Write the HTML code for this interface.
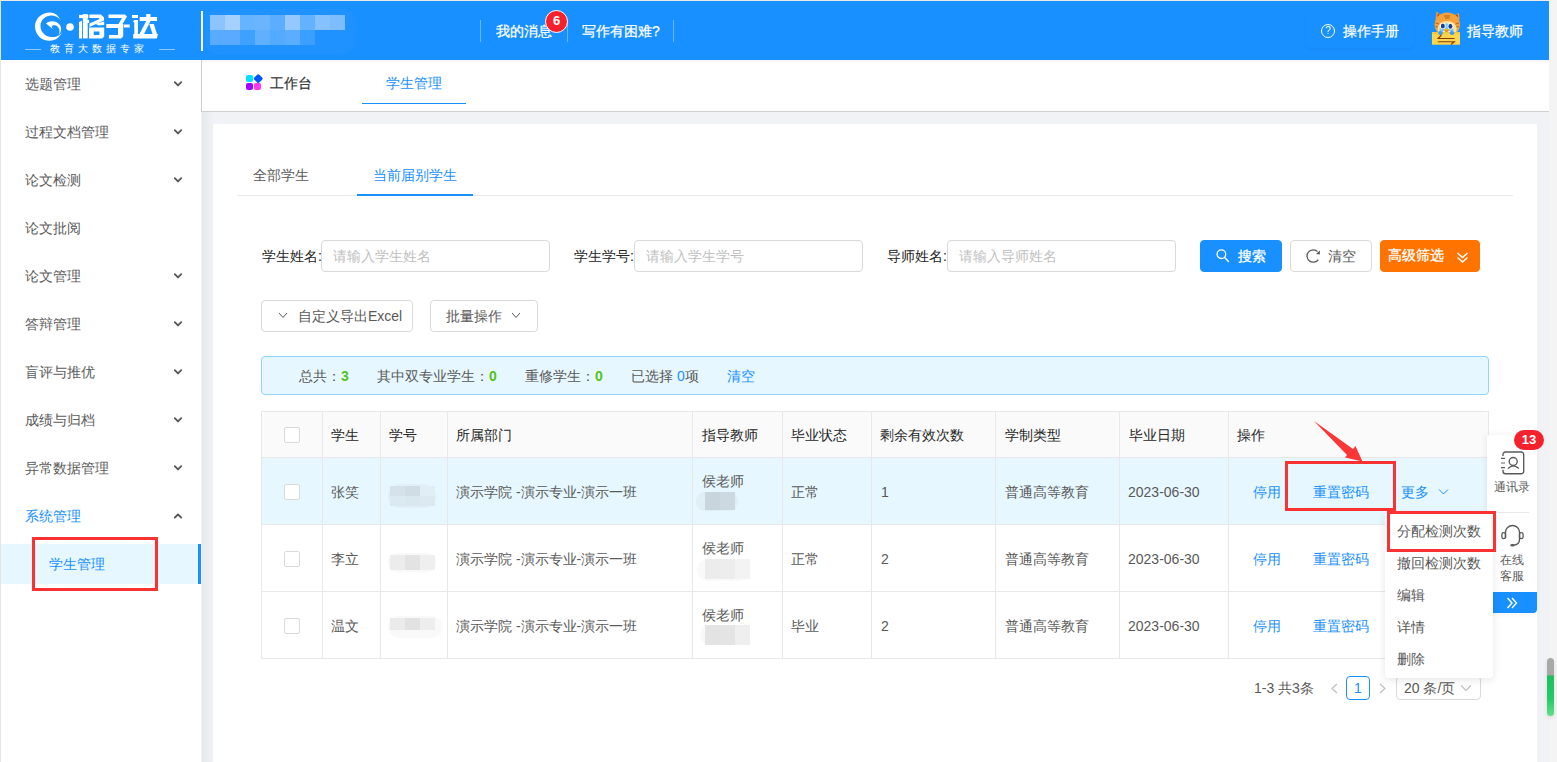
<!DOCTYPE html>
<html><head><meta charset="utf-8">
<style>
*{box-sizing:border-box;margin:0;padding:0}
html,body{width:1557px;height:762px;overflow:hidden}
body{position:relative;background:#f0f2f5;font-family:"Liberation Sans",sans-serif;font-size:14px;color:#595959}
.a{position:absolute}
.t{position:absolute;line-height:20px;white-space:nowrap}
#topline{left:0;top:0;width:1557px;height:1px;background:#ece9e6}
#leftline{left:0;top:0;width:1px;height:762px;background:#e4e4e4}
#header{left:1px;top:1px;width:1548px;height:59px;background:#1890ff}
#track{left:1549px;top:0;width:8px;height:762px;background:#f4f4f4}
#sidebar{left:1px;top:60px;width:200px;height:702px;background:#fff}
#tabbar{left:201px;top:60px;width:1348px;height:52px;background:#fff;border-left:1px solid #cfcfcf;border-bottom:1px solid #cfcfcf}
#card{left:213px;top:124px;width:1324px;height:700px;background:#fff;border-radius:2px}
.chev{position:absolute;width:6px;height:6px;border-right:1.9px solid #5a5a5a;border-bottom:1.9px solid #5a5a5a;transform:rotate(45deg)}
.side{color:#5c5c5c}
.blue{color:#1890ff}
.dark{color:#262626}
.wt{-webkit-text-stroke:0.3px #fff}
.inp{border:1px solid #d9d9d9;border-radius:4px;background:#fff}
.inp span{position:absolute;left:11px;top:5px;line-height:20px;color:#bfbfbf;white-space:nowrap}
.ln{background:#e8e8e8}
.cb{width:16px;height:16px;border:1px solid #d9d9d9;border-radius:2px;background:#fff}
.btn{border:1px solid #d9d9d9;border-radius:4px;background:#fff}

</style></head><body>
<div class="a" id="topline"></div>
<div class="a" id="leftline"></div>
<div class="a" id="track"></div>
<div class="a" id="header"></div>
<div class="a" id="sidebar"></div>
<div class="a" id="tabbar"></div>
<div class="a" style="left:201px;top:60px;width:1348px;height:3px;background:linear-gradient(180deg,rgba(0,0,0,.05),rgba(0,0,0,0))"></div>
<div class="a" id="card"></div>


<!-- header -->
<svg class="a" style="left:34px;top:11px" width="42" height="32" viewBox="0 0 42 32">
  <path d="M16 1.5 C7 1.5 1 8 1 15.5 C1 23.5 7.5 29.8 15.5 29.8 C22 29.8 26.5 25.5 28.5 20 C27 24 22.5 26.5 17.5 26 C11 25.5 6.5 21 6.5 15 C6.5 9 11.5 4.5 17.5 4.5 C21 4.5 24.5 6 26.5 9 C24.5 4.5 20.5 1.5 16 1.5 Z" fill="#fff"/>
  <path d="M12 12.5 C15.5 9.5 21 9.5 24.5 12.5 C28 15.5 28 21 24.5 24 C26.5 20.5 25.5 16 22 14.5 C20 13.8 18.5 14.2 17.5 15.5 L18.8 18 Z" fill="#fff"/>
  <circle cx="36" cy="16" r="3.8" fill="#fff"/>
</svg>
<svg class="a" style="left:70px;top:10px" width="95" height="32" viewBox="70 10 95 32">
<g fill="#fff">
 <!-- 格: 木 -->
 <rect x="79" y="14.9" width="9.3" height="3.2"/>
 <rect x="82.9" y="14" width="4.8" height="24.4"/>
 <path d="M79 22 L82 20.8 V38.4 H79 Z"/>
 <rect x="87.2" y="20" width="1.9" height="3"/>
 <!-- 格: 各 -->
 <path d="M89.4 14.5 H101 L104 17.5 V20.5 L89.4 27 V23.5 L98.5 19.5 L99.5 18 H89.4 Z"/>
 <path d="M95.5 23.8 L104.2 21.5 V25 L98.6 25.6 Z"/>
 <path d="M89 27.5 H104.2 V36.4 L102.2 38.4 H89 Z M93.7 31.4 V34.9 H99.4 V31.4 Z" fill-rule="evenodd"/>
 <!-- 子 -->
 <path d="M108.5 14.5 H125 L127 16.5 L122.5 24 H118.5 L122 18 H108.5 Z"/>
 <rect x="106.3" y="24" width="16.9" height="4"/>
 <rect x="124" y="24.5" width="5.7" height="3"/>
 <path d="M118 24 H123.2 V36.4 L121 38.4 H108.9 V34.9 H118 Z"/>
 <!-- 达 -->
 <rect x="132" y="15" width="6" height="3"/>
 <path d="M132.8 21.5 L134.3 20 H138 V34 H158 L156.8 38.4 H133.2 V34 L134.3 34 V22.5 Z"/>
 <rect x="139.7" y="17" width="17.3" height="4"/>
 <rect x="146.2" y="14" width="4.3" height="7"/>
 <path d="M146.2 21 H150.5 L144 34 H139.5 Z"/>
 <path d="M149.2 24 H153.8 L157 34 H152.6 Z"/>
</g>
</svg>
<div class="a" style="left:25px;top:49px;width:16px;height:1px;background:rgba(255,255,255,.5)"></div>
<div class="a" style="left:159px;top:49px;width:16px;height:1px;background:rgba(255,255,255,.5)"></div>
<div class="t" style="left:50px;top:43px;font-size:10px;line-height:12px;color:#fff;letter-spacing:4px">教育大数据专家</div>
<div class="a" style="left:201px;top:11px;width:2px;height:40px;background:#fff"></div>
<div class="a" style="left:205px;top:9px;width:150px;height:45px;border-radius:12px 12px 14px 12px;background:#2894ff;opacity:.5"></div>
<div class="a" style="left:210px;top:15px;width:15px;height:15px;background:#8cc4ff"></div>
<div class="a" style="left:225px;top:15px;width:15px;height:15px;background:#a6d0ff"></div>
<div class="a" style="left:240px;top:15px;width:15px;height:15px;background:#66b3ff"></div>
<div class="a" style="left:255px;top:15px;width:15px;height:15px;background:#6bb5ff"></div>
<div class="a" style="left:270px;top:15px;width:15px;height:15px;background:#5cadff"></div>
<div class="a" style="left:285px;top:15px;width:15px;height:15px;background:#94c8ff"></div>
<div class="a" style="left:300px;top:15px;width:15px;height:15px;background:#63b1ff"></div>
<div class="a" style="left:315px;top:15px;width:15px;height:15px;background:#85c1ff"></div>
<div class="a" style="left:330px;top:15px;width:15px;height:15px;background:#7dbdff"></div>
<div class="a" style="left:210px;top:30px;width:15px;height:15px;background:#59abff"></div>
<div class="a" style="left:225px;top:30px;width:15px;height:15px;background:#5aabff"></div>
<div class="a" style="left:240px;top:30px;width:15px;height:15px;background:#3ea0ff"></div>
<div class="a" style="left:255px;top:30px;width:15px;height:15px;background:#61afff"></div>
<div class="a" style="left:270px;top:30px;width:15px;height:15px;background:#54aaff"></div>
<div class="a" style="left:285px;top:30px;width:15px;height:15px;background:#5aadff"></div>
<div class="a" style="left:300px;top:30px;width:15px;height:15px;background:#3b9fff"></div>
<div class="a" style="left:480px;top:20px;width:1px;height:22px;background:rgba(255,255,255,.35)"></div>
<div class="a" style="left:567px;top:20px;width:1px;height:22px;background:rgba(255,255,255,.35)"></div>
<div class="a" style="left:673px;top:20px;width:1px;height:22px;background:rgba(255,255,255,.35)"></div>
<div class="t" style="left:496px;top:21px;color:#fff;-webkit-text-stroke:0.25px #fff">我的消息</div>
<div class="t" style="left:582px;top:21px;color:#fff;-webkit-text-stroke:0.25px #fff">写作有困难?</div>
<div class="a" style="left:545px;top:10px;width:23px;height:23px;border-radius:50%;background:#f5222d;border:1.5px solid #fff;color:#fff;font-size:13px;font-weight:bold;line-height:20px;text-align:center">6</div>
<div class="a" style="left:1305px;top:13px;width:109px;height:35px;border-radius:6px;box-shadow:0 2px 3px rgba(0,0,0,.04)"></div>
<div class="a" style="left:1321px;top:24px;width:14px;height:14px;border-radius:50%;border:1.3px solid #fff;color:#fff;font-size:10px;line-height:11px;text-align:center">?</div>
<div class="t" style="left:1343px;top:21px;color:#fff;-webkit-text-stroke:0.25px #fff">操作手册</div>
<div class="t" style="left:1467px;top:21px;color:#fff;-webkit-text-stroke:0.25px #fff">指导教师</div>
<svg class="a" style="left:1425px;top:5px" width="45" height="45" viewBox="0 0 45 45">
 <path d="M10.5 14 L11.5 6.5 L16 10 Z" fill="#f59a2e"/>
 <path d="M34.5 15 L34 8 L29 10.5 Z" fill="#f59a2e"/>
 <path d="M12.3 12 L12.8 8 L14.8 10 Z" fill="#a5561b"/>
 <path d="M33 12.5 L32.8 9 L30.5 10.5 Z" fill="#a5561b"/>
 <ellipse cx="22.3" cy="19.5" rx="12.7" ry="12" fill="#f7a238"/>
 <path d="M19 11 H25 M20 13 H24.5" stroke="#b35c1a" stroke-width="1"/>
 <path d="M10.5 18 L14 19 M10.5 21.5 L13.5 22 M34 18 L30.5 19 M34 21.5 L31 22" stroke="#b35c1a" stroke-width="0.9"/>
 <ellipse cx="22.2" cy="24" rx="9.5" ry="8" fill="#fde3a0"/>
 <ellipse cx="21.5" cy="25" rx="7" ry="6.5" fill="#6ec7ff"/>
 <ellipse cx="17.8" cy="21" rx="2.8" ry="3.2" fill="#fff"/><ellipse cx="25.4" cy="21.3" rx="2.8" ry="3.2" fill="#fff"/><ellipse cx="17.8" cy="21" rx="2" ry="2.5" fill="#1b3f8f"/>
 <ellipse cx="25.4" cy="21.3" rx="2" ry="2.5" fill="#1b3f8f"/>
 <ellipse cx="21.5" cy="28.5" rx="5.5" ry="2.8" fill="#fff"/>
 <path d="M18.5 24.5 Q21.5 23 24.8 24.5 Q23.5 27.5 21.5 27.5 Q19.5 27.5 18.5 24.5 Z" fill="#f7b21d"/>
 <path d="M20 25.8 Q21.5 27 23.3 25.8" fill="#e23b2b"/>
 <rect x="7" y="27" width="28" height="12.7" fill="#ffd54a"/>
 <rect x="7" y="27" width="28" height="2" fill="#f6c83a"/>
 <ellipse cx="15.5" cy="28" rx="2.4" ry="2" fill="#3a9df0"/>
 <ellipse cx="27" cy="28" rx="2.4" ry="2" fill="#3a9df0"/>
 <path d="M16.5 30 L13 33.5 H29.5 M12.8 36.7 H29.3 L26 39.5" fill="none" stroke="#8a3b12" stroke-width="1.1"/>
</svg>


<!-- tabbar -->
<div class="a" style="left:246px;top:75px;width:7px;height:7px;border-radius:2px;background:#00e1ff"></div>
<div class="a" style="left:255px;top:75px;width:6.5px;height:6.5px;border-radius:1.5px;background:#0055ff;transform:rotate(45deg)"></div>
<div class="a" style="left:246px;top:83px;width:7px;height:7px;border-radius:2px;background:#a400ff"></div>
<div class="a" style="left:254px;top:83px;width:7px;height:7px;border-radius:2px;background:#ff36f0"></div>
<div class="t" style="left:270px;top:73px;color:#333;font-size:14px;-webkit-text-stroke:0.2px #333">工作台</div>
<div class="t blue" style="left:386px;top:73px">学生管理</div>
<div class="a" style="left:362px;top:103px;width:104px;height:1px;background:#1890ff"></div>
<div class="a" style="left:202px;top:112px;width:12px;height:650px;background:linear-gradient(90deg,rgba(0,0,0,.04),rgba(0,0,0,0))"></div>

<!-- tabs -->
<div class="a" style="left:237px;top:195px;width:1276px;height:1px;background:#e8e8e8"></div>
<div class="t" style="left:253px;top:165px;color:#595959">全部学生</div>
<div class="t blue" style="left:373px;top:165px">当前届别学生</div>
<div class="a" style="left:357px;top:194px;width:116px;height:2px;background:#1890ff"></div>

<!-- search -->
<div class="t dark" style="left:262px;top:246px">学生姓名:</div>
<div class="a inp" style="left:321px;top:240px;width:229px;height:32px"><span>请输入学生姓名</span></div>
<div class="t dark" style="left:574px;top:246px">学生学号:</div>
<div class="a inp" style="left:634px;top:240px;width:229px;height:32px"><span>请输入学生学号</span></div>
<div class="t dark" style="left:887px;top:246px">导师姓名:</div>
<div class="a inp" style="left:947px;top:240px;width:229px;height:32px"><span>请输入导师姓名</span></div>
<div class="a btn" style="left:1200px;top:240px;width:82px;height:32px;background:#1890ff;border-color:#1890ff;color:#fff"></div>
<div class="t wt" style="left:1238px;top:246px;color:#fff">搜索</div>
<svg class="a" style="left:1216px;top:248px" width="15" height="15" viewBox="0 0 15 15"><circle cx="5.4" cy="6.2" r="4.3" fill="none" stroke="#fff" stroke-width="1.3"/><path d="M8.6 9.5 L12.5 13.5" stroke="#fff" stroke-width="1.4" stroke-linecap="round"/></svg>
<div class="a btn" style="left:1290px;top:240px;width:82px;height:32px"></div>
<svg class="a" style="left:1305px;top:248px" width="16" height="16" viewBox="0 0 16 16"><path d="M12.6 3.6 A6.2 6.2 0 1 0 13.3 11.6" fill="none" stroke="#595959" stroke-width="1.3"/><path d="M15 2.4 L14.8 6.4 L11 6 Z" fill="#595959"/></svg>
<div class="t" style="left:1328px;top:246px;color:#595959">清空</div>
<div class="a btn" style="left:1380px;top:240px;width:100px;height:32px;background:#ff7300;border-color:#ff7300"></div>
<div class="t wt" style="left:1388px;top:245px;color:#fff">高级筛选</div>
<svg class="a" style="left:1456px;top:251px" width="13" height="13" viewBox="0 0 13 13"><path d="M1.5 2 L6.5 6.5 L11.5 2 M1.5 6.5 L6.5 11 L11.5 6.5" fill="none" stroke="#fff" stroke-width="1.5"/></svg>

<div class="a btn" style="left:261px;top:300px;width:152px;height:32px"></div>
<svg class="a" style="left:278px;top:312px" width="10" height="7" viewBox="0 0 10 7"><path d="M1 1 L5 5.5 L9 1" fill="none" stroke="#595959" stroke-width="1"/></svg>
<div class="t" style="left:298px;top:306px;color:#595959">自定义导出Excel</div>
<div class="a btn" style="left:430px;top:300px;width:108px;height:32px"></div>
<div class="t" style="left:446px;top:306px;color:#595959">批量操作</div>
<svg class="a" style="left:511px;top:312px" width="10" height="7" viewBox="0 0 10 7"><path d="M1 1 L5 5.5 L9 1" fill="none" stroke="#595959" stroke-width="1"/></svg>

<!-- alert -->
<div class="a" style="left:261px;top:356px;width:1228px;height:39px;background:#e6f7ff;border:1px solid #91d5ff;border-radius:4px"></div>
<div class="t" style="left:299px;top:366px">总共：<span style="color:#52c41a;font-weight:bold;margin-left:0px">3</span></div>
<div class="t" style="left:377px;top:366px">其中双专业学生：<span style="color:#52c41a;font-weight:bold">0</span></div>
<div class="t" style="left:525px;top:366px">重修学生：<span style="color:#52c41a;font-weight:bold">0</span></div>
<div class="t" style="left:631px;top:366px">已选择 <span style="color:#1890ff">0</span>项</div>
<div class="t blue" style="left:727px;top:366px">清空</div>

<!-- table -->
<div class="a" style="left:262px;top:412px;width:1226px;height:45px;background:#fafafa;border-radius:4px 4px 0 0"></div>
<div class="a" style="left:262px;top:458px;width:1226px;height:66px;background:#e6f7ff"></div>
<div class="a ln" style="left:261px;top:411px;width:1228px;height:1px"></div>
<div class="a ln" style="left:261px;top:457px;width:1228px;height:1px"></div>
<div class="a ln" style="left:261px;top:524px;width:1228px;height:1px"></div>
<div class="a ln" style="left:261px;top:591px;width:1228px;height:1px"></div>
<div class="a ln" style="left:261px;top:658px;width:1228px;height:1px"></div>
<div class="a ln" style="left:261px;top:412px;width:1px;height:246px"></div>
<div class="a ln" style="left:322px;top:412px;width:1px;height:246px"></div>
<div class="a ln" style="left:380px;top:412px;width:1px;height:246px"></div>
<div class="a ln" style="left:447px;top:412px;width:1px;height:246px"></div>
<div class="a ln" style="left:692px;top:412px;width:1px;height:246px"></div>
<div class="a ln" style="left:782px;top:412px;width:1px;height:246px"></div>
<div class="a ln" style="left:871px;top:412px;width:1px;height:246px"></div>
<div class="a ln" style="left:995px;top:412px;width:1px;height:246px"></div>
<div class="a ln" style="left:1119px;top:412px;width:1px;height:246px"></div>
<div class="a ln" style="left:1228px;top:412px;width:1px;height:246px"></div>
<div class="a ln" style="left:1488px;top:412px;width:1px;height:246px"></div>
<div class="t dark" style="left:331px;top:425px">学生</div>
<div class="t dark" style="left:389px;top:425px">学号</div>
<div class="t dark" style="left:456px;top:425px">所属部门</div>
<div class="t dark" style="left:702px;top:425px">指导教师</div>
<div class="t dark" style="left:791px;top:425px">毕业状态</div>
<div class="t dark" style="left:880px;top:425px">剩余有效次数</div>
<div class="t dark" style="left:1005px;top:425px">学制类型</div>
<div class="t dark" style="left:1129px;top:425px">毕业日期</div>
<div class="t dark" style="left:1237px;top:425px">操作</div>
<div class="a cb" style="left:284px;top:427px"></div>
<div class="a cb" style="left:284px;top:484px"></div>
<div class="t" style="left:331px;top:482px">张笑</div>
<div class="t" style="left:456px;top:482px">演示学院 -演示专业-演示一班</div>
<div class="t" style="left:702px;top:471px">侯老师</div>
<div class="t" style="left:791px;top:482px">正常</div>
<div class="t" style="left:881px;top:482px">1</div>
<div class="t" style="left:1005px;top:482px">普通高等教育</div>
<div class="t" style="left:1128px;top:482px">2023-06-30</div>
<div class="t blue" style="left:1253px;top:482px">停用</div>
<div class="t blue" style="left:1313px;top:482px">重置密码</div>
<div class="a cb" style="left:284px;top:551px"></div>
<div class="t" style="left:331px;top:549px">李立</div>
<div class="t" style="left:456px;top:549px">演示学院 -演示专业-演示一班</div>
<div class="t" style="left:702px;top:538px">侯老师</div>
<div class="t" style="left:791px;top:549px">正常</div>
<div class="t" style="left:881px;top:549px">2</div>
<div class="t" style="left:1005px;top:549px">普通高等教育</div>
<div class="t" style="left:1128px;top:549px">2023-06-30</div>
<div class="t blue" style="left:1253px;top:549px">停用</div>
<div class="t blue" style="left:1313px;top:549px">重置密码</div>
<div class="a cb" style="left:284px;top:618px"></div>
<div class="t" style="left:331px;top:616px">温文</div>
<div class="t" style="left:456px;top:616px">演示学院 -演示专业-演示一班</div>
<div class="t" style="left:702px;top:605px">侯老师</div>
<div class="t" style="left:791px;top:616px">毕业</div>
<div class="t" style="left:881px;top:616px">2</div>
<div class="t" style="left:1005px;top:616px">普通高等教育</div>
<div class="t" style="left:1128px;top:616px">2023-06-30</div>
<div class="t blue" style="left:1253px;top:616px">停用</div>
<div class="t blue" style="left:1313px;top:616px">重置密码</div>
<div class="a" style="left:388px;top:484px;width:48px;height:24px;border-radius:12px;background:#e1f0f8"></div>
<div class="a" style="left:390px;top:486px;width:15px;height:10px;background:#d5e2ea"></div>
<div class="a" style="left:405px;top:486px;width:15px;height:10px;background:#d0dde5"></div>
<div class="a" style="left:420px;top:486px;width:15px;height:10px;background:#e0eef6"></div>
<div class="a" style="left:390px;top:496px;width:15px;height:10px;background:#dbe9f1"></div>
<div class="a" style="left:405px;top:496px;width:15px;height:10px;background:#d9e7ef"></div>
<div class="a" style="left:420px;top:496px;width:15px;height:10px;background:#dde9f1"></div>
<div class="a" style="left:696px;top:492px;width:42px;height:19px;border-radius:9px;background:#e0eef6"></div>
<div class="a" style="left:705px;top:492px;width:15px;height:18px;background:#c8d5dd"></div>
<div class="a" style="left:720px;top:492px;width:15px;height:18px;background:#ccd9e1"></div>
<div class="a" style="left:388px;top:553px;width:48px;height:19px;border-radius:9px;background:#f9f9f9"></div>
<div class="a" style="left:390px;top:555px;width:15px;height:15px;background:#ececec"></div>
<div class="a" style="left:405px;top:555px;width:15px;height:15px;background:#e3e3e3"></div>
<div class="a" style="left:420px;top:555px;width:15px;height:15px;background:#efefef"></div>
<div class="a" style="left:697px;top:559px;width:52px;height:22px;border-radius:11px;background:#f9f9f9"></div>
<div class="a" style="left:705px;top:559px;width:15px;height:20px;background:#ececec"></div>
<div class="a" style="left:720px;top:559px;width:15px;height:20px;background:#ededed"></div>
<div class="a" style="left:735px;top:559px;width:15px;height:20px;background:#f3f3f3"></div>
<div class="a" style="left:388px;top:616px;width:54px;height:22px;border-radius:11px;background:#f9f9f9"></div>
<div class="a" style="left:390px;top:618px;width:15px;height:12px;background:#ebebeb"></div>
<div class="a" style="left:405px;top:618px;width:15px;height:12px;background:#e2e2e2"></div>
<div class="a" style="left:420px;top:618px;width:15px;height:12px;background:#eeeeee"></div>
<div class="a" style="left:700px;top:625px;width:50px;height:20px;border-radius:10px;background:#f8f8f8"></div>
<div class="a" style="left:705px;top:625px;width:15px;height:20px;background:#e3e3e3"></div>
<div class="a" style="left:720px;top:625px;width:15px;height:20px;background:#e4e4e4"></div>
<div class="a" style="left:735px;top:625px;width:15px;height:20px;background:#efefef"></div>
<div class="t blue" style="left:1401px;top:482px">更多</div>
<svg class="a" style="left:1438px;top:488px" width="11" height="8" viewBox="0 0 11 8"><path d="M1 1.5 L5.5 6 L10 1.5" fill="none" stroke="#1890ff" stroke-width="1"/></svg>
<div class="t" style="left:1254px;top:678px">1-3 共3条</div>
<svg class="a" style="left:1330px;top:683px" width="9" height="11" viewBox="0 0 9 11"><path d="M7 1 L2 5.5 L7 10" fill="none" stroke="#bfbfbf" stroke-width="1.2"/></svg>
<div class="a" style="left:1346px;top:676px;width:24px;height:24px;border:1px solid #1890ff;border-radius:4px;color:#1890ff;text-align:center;line-height:22px">1</div>
<svg class="a" style="left:1378px;top:683px" width="9" height="11" viewBox="0 0 9 11"><path d="M2 1 L7 5.5 L2 10" fill="none" stroke="#bfbfbf" stroke-width="1.2"/></svg>
<div class="a" style="left:1396px;top:676px;width:85px;height:24px;border:1px solid #d9d9d9;border-radius:4px"></div>
<div class="t" style="left:1404px;top:678px">20 条/页</div>
<svg class="a" style="left:1460px;top:684px" width="12" height="8" viewBox="0 0 12 8"><path d="M1 1.5 L6 6.5 L11 1.5" fill="none" stroke="#bfbfbf" stroke-width="1.1"/></svg>

<!-- overlays -->
<div class="a" style="left:1487px;top:435px;width:50px;height:178px;background:#fff;box-shadow:-1px 0 6px rgba(0,0,0,.07);border-radius:2px 0 0 2px"></div>
<svg class="a" style="left:1496px;top:447px" width="34" height="32" viewBox="0 0 34 32">
 <path d="M7 9 V7.5 A2.5 2.5 0 0 1 9.5 5 H25.2 A2.5 2.5 0 0 1 27.7 7.5 V24.2 A2.5 2.5 0 0 1 25.2 26.7 H9.5 A2.5 2.5 0 0 1 7 24.2 V22.7" fill="none" stroke="#595959" stroke-width="1.35"/>
 <path d="M5 11.3 H9 M5 20.6 H9" stroke="#595959" stroke-width="1.35"/>
 <path d="M5 16 H9" stroke="#8c8c8c" stroke-width="1.35"/>
 <circle cx="17.2" cy="14.5" r="4" fill="none" stroke="#595959" stroke-width="1.35"/>
 <path d="M12 21.6 Q17.2 16 22.9 21.6" fill="none" stroke="#595959" stroke-width="1.35"/>
</svg>
<div class="t" style="left:1494px;top:478px;font-size:12px;line-height:18px;color:#595959">通讯录</div>
<div class="a" style="left:1497px;top:512px;width:32px;height:1px;background:#e8e8e8"></div>
<svg class="a" style="left:1496px;top:520px" width="34" height="32" viewBox="0 0 34 32">
 <path d="M9.5 18 V12 A7 6.5 0 0 1 23.5 12 V19.5 C23.5 23 21 25 17.5 25.2" fill="none" stroke="#595959" stroke-width="1.4"/>
 <rect x="5.9" y="12.6" width="3.6" height="6.1" rx="1.8" fill="none" stroke="#595959" stroke-width="1.3"/>
 <rect x="23.5" y="12.6" width="3.6" height="6.1" rx="1.8" fill="none" stroke="#595959" stroke-width="1.3"/>
 <ellipse cx="16.4" cy="25.3" rx="2.2" ry="1.3" fill="#595959"/>
</svg>
<div class="t" style="left:1500px;top:552px;font-size:12px;line-height:16px;color:#595959">在线<br>客服</div>
<div class="a" style="left:1487px;top:592px;width:50px;height:21px;background:#1890ff;border-radius:0 0 4px 0"></div>
<svg class="a" style="left:1506px;top:597px" width="12" height="12" viewBox="0 0 12 12"><path d="M1.5 1 L6 6 L1.5 11 M6 1 L10.5 6 L6 11" fill="none" stroke="#fff" stroke-width="1.4"/></svg>
<div class="a" style="left:1514px;top:430px;width:30px;height:20px;border-radius:10px;background:#f5222d;color:#fff;font-size:13px;font-weight:bold;line-height:20px;text-align:center">13</div>

<div class="a" style="left:1385px;top:513px;width:108px;height:165px;background:#fff;border-radius:4px;box-shadow:0 2px 8px rgba(0,0,0,.1)"></div>
<div class="t" style="left:1397px;top:521px">分配检测次数</div>
<div class="t" style="left:1397px;top:553px">撤回检测次数</div>
<div class="t" style="left:1397px;top:585px">编辑</div>
<div class="t" style="left:1397px;top:617px">详情</div>
<div class="t" style="left:1397px;top:649px">删除</div>

<div class="a" style="left:1285px;top:461px;width:111px;height:50px;border:3px solid #fb3232"></div>
<div class="a" style="left:1387px;top:511px;width:109px;height:41px;border:3px solid #fb3232"></div>
<svg class="a" style="left:1300px;top:410px" width="70" height="55" viewBox="0 0 70 55">
 <path d="M14 11 L53 39 L55.5 36 L62.5 51.5 L45 47.5 L47 45 Z" fill="#fb3636"/>
</svg>
<div class="a" style="left:1547px;top:658px;width:7px;height:58px;border-radius:3.5px;background:linear-gradient(180deg,#a8a8a8 0,#a8a8a8 29%,#1fbf5f 31%,#25c966 70%,#5fe08a 100%);box-shadow:0 2px 4px rgba(0,0,0,.1)"></div>

<!-- sidebar -->
<div class="t side" style="left:25px;top:74px">选题管理</div>
<div class="t side" style="left:25px;top:122px">过程文档管理</div>
<div class="t side" style="left:25px;top:170px">论文检测</div>
<div class="t side" style="left:25px;top:218px">论文批阅</div>
<div class="t side" style="left:25px;top:266px">论文管理</div>
<div class="t side" style="left:25px;top:314px">答辩管理</div>
<div class="t side" style="left:25px;top:362px">盲评与推优</div>
<div class="t side" style="left:25px;top:410px">成绩与归档</div>
<div class="t side" style="left:25px;top:458px">异常数据管理</div>
<div class="t blue" style="left:25px;top:506px">系统管理</div>
<div class="a" style="left:1px;top:544px;width:200px;height:40px;background:#e6f7ff"></div>
<div class="a" style="left:198px;top:544px;width:3px;height:40px;background:#1890ff"></div>
<div class="t blue" style="left:49px;top:554px">学生管理</div>
<svg class="a" style="left:172px;top:76px" width="12" height="12" viewBox="0 0 12 12"><path d="M2.8 6.2 L6 9.4 L9.2 6.2" fill="none" stroke="#555" stroke-width="1.9" stroke-linecap="round" stroke-linejoin="round"/></svg>
<svg class="a" style="left:172px;top:124px" width="12" height="12" viewBox="0 0 12 12"><path d="M2.8 6.2 L6 9.4 L9.2 6.2" fill="none" stroke="#555" stroke-width="1.9" stroke-linecap="round" stroke-linejoin="round"/></svg>
<svg class="a" style="left:172px;top:172px" width="12" height="12" viewBox="0 0 12 12"><path d="M2.8 6.2 L6 9.4 L9.2 6.2" fill="none" stroke="#555" stroke-width="1.9" stroke-linecap="round" stroke-linejoin="round"/></svg>
<svg class="a" style="left:172px;top:268px" width="12" height="12" viewBox="0 0 12 12"><path d="M2.8 6.2 L6 9.4 L9.2 6.2" fill="none" stroke="#555" stroke-width="1.9" stroke-linecap="round" stroke-linejoin="round"/></svg>
<svg class="a" style="left:172px;top:316px" width="12" height="12" viewBox="0 0 12 12"><path d="M2.8 6.2 L6 9.4 L9.2 6.2" fill="none" stroke="#555" stroke-width="1.9" stroke-linecap="round" stroke-linejoin="round"/></svg>
<svg class="a" style="left:172px;top:364px" width="12" height="12" viewBox="0 0 12 12"><path d="M2.8 6.2 L6 9.4 L9.2 6.2" fill="none" stroke="#555" stroke-width="1.9" stroke-linecap="round" stroke-linejoin="round"/></svg>
<svg class="a" style="left:172px;top:412px" width="12" height="12" viewBox="0 0 12 12"><path d="M2.8 6.2 L6 9.4 L9.2 6.2" fill="none" stroke="#555" stroke-width="1.9" stroke-linecap="round" stroke-linejoin="round"/></svg>
<svg class="a" style="left:172px;top:460px" width="12" height="12" viewBox="0 0 12 12"><path d="M2.8 6.2 L6 9.4 L9.2 6.2" fill="none" stroke="#555" stroke-width="1.9" stroke-linecap="round" stroke-linejoin="round"/></svg>
<svg class="a" style="left:172px;top:509px" width="12" height="12" viewBox="0 0 12 12"><path d="M2.8 8.6 L6 5.4 L9.2 8.6" fill="none" stroke="#555" stroke-width="1.9" stroke-linecap="round" stroke-linejoin="round"/></svg>
<div class="a" style="left:32px;top:537px;width:126px;height:54px;border:3px solid #fb3232"></div>

</body></html>
